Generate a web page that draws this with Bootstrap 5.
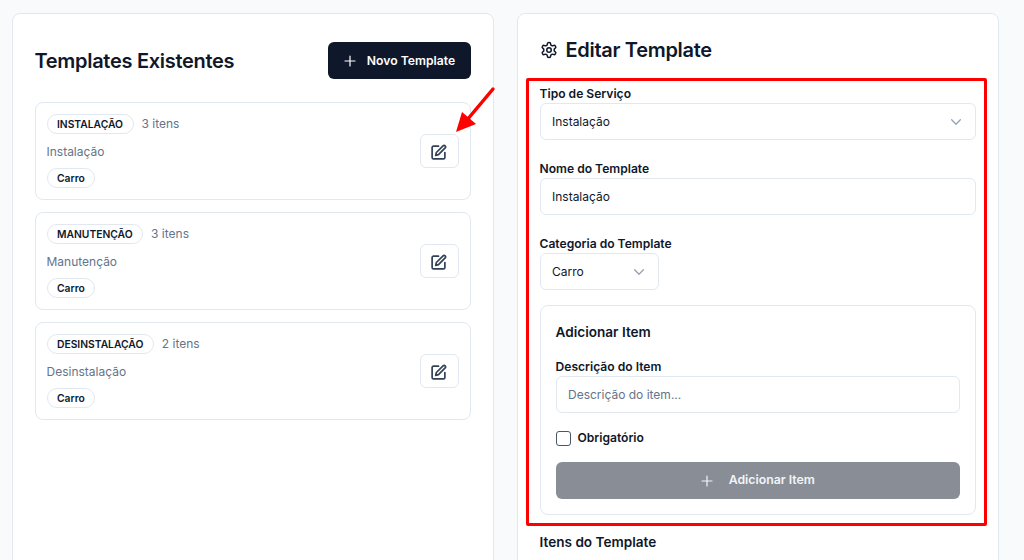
<!DOCTYPE html>
<html lang="pt-BR">
<head>
<meta charset="utf-8">
<title>Templates</title>
<link rel="stylesheet" href="https://cdn.jsdelivr.net/npm/bootstrap@5.3.0/dist/css/bootstrap.min.css">
<style>
html,body{height:560px;overflow:hidden}
body{background:#f8fafc;font-family:Inter,"Noto Sans",sans-serif;color:#0f172a;position:relative}
.shell{display:grid;grid-template-columns:482px 482px;column-gap:23px;padding:13px 0 0 12px}
.panel{background:#fff;border:1px solid #e2e8f0;border-radius:8px;height:600px;padding:28px 22px 0 21.5px}
.panel-right{padding-top:17px}
.panel-head{height:37px;margin-bottom:23px}
.panel-right .panel-head{margin-bottom:19px}
.panel-title{font-size:20px;font-weight:600;letter-spacing:-.3px;margin:0;line-height:1.2}
.new-btn{background:#0f172a;border:0;color:#fff;font-size:12.2px;font-weight:600;height:37px;width:143px;border-radius:6px;gap:11px;padding:1px 0 0}
.tpl-item{border:1px solid #e2e8f0;border-radius:8px;height:98px;padding:11px 11px 11px;margin-bottom:12px}
.pill{background:#fff;color:#0f172a;border:1px solid #e2e8f0;border-radius:50rem;font-size:10.3px;font-weight:600;line-height:1;padding:4px 9.5px;height:20px;display:inline-flex;align-items:center}
.count{font-size:12px;color:#64748b;margin-left:8px}
.tpl-name{font-size:12px;color:#64748b;line-height:1;margin:12px 0 10px}
.edit-btn{width:39px;height:34px;border:1px solid #e2e8f0;border-radius:6px;background:#fff;padding:2px 2px 0 0;margin-top:20px}
.fld-label{font-size:12.1px;font-weight:600;margin:0;line-height:13px;display:block;color:#0f172a}
.form-control.fld,.form-select.fld{font-size:12px;height:37px;border:1px solid #e2e8f0;border-radius:6px;color:#0f172a;padding:0 11.5px;margin-top:3px;box-shadow:none;font-family:inherit}
.form-select.fld{background-image:url("data:image/svg+xml,%3csvg xmlns='http://www.w3.org/2000/svg' viewBox='0 0 16 16'%3e%3cpath fill='none' stroke='%2394a3b8' stroke-linecap='round' stroke-linejoin='round' stroke-width='1.5' d='M3 5.5l5 5 5-5'/%3e%3c/svg%3e");background-position:right 12px center;background-size:14px 14px}
.form-control.fld::placeholder{color:#64748b;opacity:1}
.fld-wrap{margin-bottom:22px}
.add-box{border:1px solid #e2e8f0;border-radius:8px;height:210px;padding:19px 15px 0 15px;margin-top:15px}
.add-title{font-size:13.6px;font-weight:600;line-height:14px;margin:0 0 21px}
.form-check-input.chk{width:15px;height:15px;border:1.5px solid #475569;border-radius:3px;margin:0}
.chk-label{font-size:12.1px;font-weight:600;margin:0 0 0 7px;line-height:1}
.chk-row{margin-top:18px}
.add-btn{background:#898d95;border:0;border-radius:6px;color:#f1f5f9;font-size:12.3px;font-weight:600;height:37px;gap:16px;margin-top:16px}
.items-title{font-size:13.6px;font-weight:600;line-height:14px;margin:20px 0 0}
.note-box{position:absolute;left:526px;top:78px;width:461px;height:448px;border:3px solid #f00;border-radius:2px;pointer-events:none}
.note-arrow{position:absolute;left:450px;top:82px;width:50px;height:54px;pointer-events:none}
</style>
</head>
<body>
<div class="shell">
  <section class="panel">
    <div class="panel-head d-flex justify-content-between align-items-center">
      <h2 class="panel-title">Templates Existentes</h2>
      <button type="button" class="btn new-btn d-inline-flex align-items-center justify-content-center">
        <svg width="12" height="12" viewBox="0 0 12 12" fill="none" stroke="#fff" stroke-width="1.2" stroke-linecap="round"><path d="M6 1v10M1 6h10"/></svg>
        Novo Template
      </button>
    </div>

    <div class="tpl-item d-flex justify-content-between">
      <div class="d-flex flex-column align-items-start">
        <div class="d-flex align-items-center"><span class="pill">INSTALAÇÃO</span><span class="count">3 itens</span></div>
        <p class="tpl-name">Instalação</p>
        <span class="pill">Carro</span>
      </div>
      <button type="button" class="btn edit-btn d-flex align-items-center justify-content-center" aria-label="Editar">
        <svg width="17" height="17" viewBox="0 0 24 24" fill="none" stroke="#334155" stroke-width="2.4" stroke-linecap="round" stroke-linejoin="round"><path d="M12 3H5a2 2 0 0 0-2 2v14a2 2 0 0 0 2 2h14a2 2 0 0 0 2-2v-7"/><path d="M18.4 2.6a2.1 2.1 0 0 1 3 3L12 15l-4 1 1-4Z"/></svg>
      </button>
    </div>

    <div class="tpl-item d-flex justify-content-between">
      <div class="d-flex flex-column align-items-start">
        <div class="d-flex align-items-center"><span class="pill">MANUTENÇÃO</span><span class="count">3 itens</span></div>
        <p class="tpl-name">Manutenção</p>
        <span class="pill">Carro</span>
      </div>
      <button type="button" class="btn edit-btn d-flex align-items-center justify-content-center" aria-label="Editar">
        <svg width="17" height="17" viewBox="0 0 24 24" fill="none" stroke="#334155" stroke-width="2.4" stroke-linecap="round" stroke-linejoin="round"><path d="M12 3H5a2 2 0 0 0-2 2v14a2 2 0 0 0 2 2h14a2 2 0 0 0 2-2v-7"/><path d="M18.4 2.6a2.1 2.1 0 0 1 3 3L12 15l-4 1 1-4Z"/></svg>
      </button>
    </div>

    <div class="tpl-item d-flex justify-content-between">
      <div class="d-flex flex-column align-items-start">
        <div class="d-flex align-items-center"><span class="pill">DESINSTALAÇÃO</span><span class="count">2 itens</span></div>
        <p class="tpl-name">Desinstalação</p>
        <span class="pill">Carro</span>
      </div>
      <button type="button" class="btn edit-btn d-flex align-items-center justify-content-center" aria-label="Editar">
        <svg width="17" height="17" viewBox="0 0 24 24" fill="none" stroke="#334155" stroke-width="2.4" stroke-linecap="round" stroke-linejoin="round"><path d="M12 3H5a2 2 0 0 0-2 2v14a2 2 0 0 0 2 2h14a2 2 0 0 0 2-2v-7"/><path d="M18.4 2.6a2.1 2.1 0 0 1 3 3L12 15l-4 1 1-4Z"/></svg>
      </button>
    </div>
  </section>

  <section class="panel panel-right">
    <div class="d-flex align-items-center gap-2 panel-head">
      <svg width="18" height="18" viewBox="0 0 24 24" fill="none" stroke="#0f172a" stroke-width="2" stroke-linecap="round" stroke-linejoin="round"><path d="M12.22 2h-.44a2 2 0 0 0-2 2v.18a2 2 0 0 1-1 1.73l-.43.25a2 2 0 0 1-2 0l-.15-.08a2 2 0 0 0-2.73.73l-.22.38a2 2 0 0 0 .73 2.73l.15.1a2 2 0 0 1 1 1.72v.51a2 2 0 0 1-1 1.74l-.15.09a2 2 0 0 0-.73 2.73l.22.38a2 2 0 0 0 2.73.73l.15-.08a2 2 0 0 1 2 0l.43.25a2 2 0 0 1 1 1.73V20a2 2 0 0 0 2 2h.44a2 2 0 0 0 2-2v-.18a2 2 0 0 1 1-1.73l.43-.25a2 2 0 0 1 2 0l.15.08a2 2 0 0 0 2.73-.73l.22-.39a2 2 0 0 0-.73-2.73l-.15-.08a2 2 0 0 1-1-1.74v-.5a2 2 0 0 1 1-1.74l.15-.09a2 2 0 0 0 .73-2.73l-.22-.38a2 2 0 0 0-2.73-.73l-.15.08a2 2 0 0 1-2 0l-.43-.25a2 2 0 0 1-1-1.73V4a2 2 0 0 0-2-2z"/><circle cx="12" cy="12" r="3"/></svg>
      <h2 class="panel-title">Editar Template</h2>
    </div>

    <form>
      <div class="fld-wrap">
        <label class="fld-label" for="tipo">Tipo de Serviço</label>
        <select id="tipo" class="form-select fld"><option>Instalação</option></select>
      </div>
      <div class="fld-wrap">
        <label class="fld-label" for="nome">Nome do Template</label>
        <input id="nome" class="form-control fld" value="Instalação">
      </div>
      <div>
        <label class="fld-label" for="cat">Categoria do Template</label>
        <select id="cat" class="form-select fld" style="width:119px"><option>Carro</option></select>
      </div>

      <div class="add-box">
        <h3 class="add-title">Adicionar Item</h3>
        <label class="fld-label" for="desc">Descrição do Item</label>
        <input id="desc" class="form-control fld" placeholder="Descrição do item...">
        <div class="d-flex align-items-center chk-row">
          <input id="obr" class="form-check-input chk" type="checkbox">
          <label class="chk-label" for="obr">Obrigatório</label>
        </div>
        <button type="button" class="btn add-btn w-100 d-flex align-items-center justify-content-center">
          <svg width="12" height="12" viewBox="0 0 12 12" fill="none" stroke="#f1f5f9" stroke-width="1.2" stroke-linecap="round"><path d="M6 1v10M1 6h10"/></svg>
          Adicionar Item
        </button>
      </div>
      <h3 class="items-title">Itens do Template</h3>
    </form>
  </section>
</div>

<div class="note-box"></div>
<svg class="note-arrow" viewBox="0 0 50 54"><path d="M43 7 17 38" stroke="#f00" stroke-width="3.5" stroke-linecap="round"/><path d="M6 50 12 30 26 42Z" fill="#f00"/></svg>
</body>
</html>
